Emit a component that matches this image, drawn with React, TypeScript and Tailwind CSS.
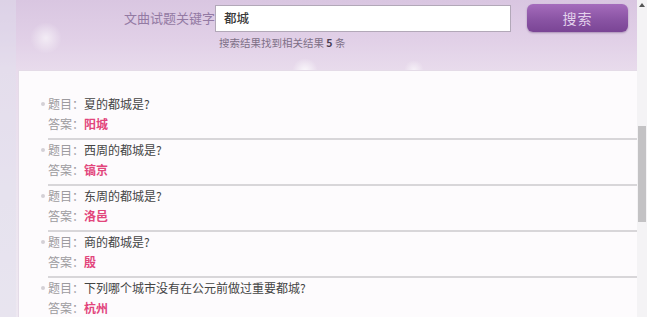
import React from "react";

const items = [
  { q: "夏的都城是?", a: "阳城" },
  { q: "西周的都城是?", a: "镐京" },
  { q: "东周的都城是?", a: "洛邑" },
  { q: "商的都城是?", a: "殷" },
  { q: "下列哪个城市没有在公元前做过重要都城?", a: "杭州" },
];

const font = { fontFamily: '"Noto Sans CJK SC", "Noto Sans", sans-serif' };

export default function App() {
  return (
    <div
      className="relative w-[647px] h-[317px] overflow-hidden flex bg-[linear-gradient(180deg,#d9c6e1_0%,#e1d0e7_40px,#e8dbec_70px,#ece4ef_200px,#eee8f1_100%)]"
      style={font}
    >
      {/* bokeh spots */}
      <div className="absolute left-[30px] top-[22px] w-[32px] h-[32px] rounded-full bg-[radial-gradient(circle,rgba(255,255,255,0.6)_0%,rgba(255,255,255,0)_70%)]" />
      <div className="absolute left-[292px] top-[58px] w-[26px] h-[26px] rounded-full bg-[radial-gradient(circle,rgba(255,255,255,0.8)_0%,rgba(255,255,255,0)_70%)]" />
      <div className="absolute left-[404px] top-[60px] w-[20px] h-[20px] rounded-full bg-[radial-gradient(circle,rgba(255,255,255,0.6)_0%,rgba(255,255,255,0)_70%)]" />
      <div className="absolute left-0 top-0 w-[16px] h-full bg-[rgba(225,225,238,0.45)]" />

      <div className="relative flex-1 flex flex-col min-h-0">
        {/* header */}
        <div className="h-[70px] shrink-0 pt-[4px]">
          <div className="flex items-center h-[28px]">
            <span className="ml-[124px] w-[88px] text-[13px] leading-[28px] text-[#937aa3] whitespace-nowrap">
              文曲试题关键字
            </span>
            <div className="ml-[3px] w-[296px] h-[27px] bg-white border border-[#b2a8b8] flex items-center pl-[8px]">
              <span className="text-[12.5px] font-medium text-[#3a3a3a]">都城</span>
            </div>
            <button className="ml-[16px] w-[101px] h-[28px] rounded-[6px] bg-[linear-gradient(180deg,#a56cbc_0%,#8a54a4_55%,#7a4595_100%)] text-[14px] text-[#e3d2ec] tracking-[1px] shadow-[0_1px_2px_rgba(90,50,110,0.4)]">
              搜索
            </button>
          </div>
          <div className="ml-[219px] mt-[3px] text-[10.5px] leading-[16px] text-[#7d6f86] whitespace-nowrap">
            搜索结果找到相关结果 <span className="font-bold text-[#4a3d52]">5</span> 条
          </div>
        </div>

        {/* panel */}
        <div className="ml-[18px] flex-1 min-h-0 overflow-hidden bg-[#fdfbfd] border-t border-l border-[#e4dbe7] pt-[23px]">
          {items.map((it, i) => (
            <div
              key={i}
              className={
                "relative ml-[29px] pb-[4px] " +
                (i < items.length - 1 ? "border-b-2 border-[#d8d6d9]" : "")
              }
            >
              <span className="absolute left-[-7px] top-[8px] w-[4px] h-[4px] rounded-full bg-[#d4d0d6]" />
              <div className="flex h-[20px] items-center text-[12px] whitespace-nowrap">
                <span className="w-[36px] text-[#9c9a9e]">题目：</span>
                <span className="text-[#444]">{it.q}</span>
              </div>
              <div className="flex h-[20px] items-center text-[12px] whitespace-nowrap">
                <span className="w-[36px] text-[#9c9a9e]">答案：</span>
                <span className="font-bold text-[#e2457c]">{it.a}</span>
              </div>
            </div>
          ))}
        </div>
      </div>

      {/* scrollbar */}
      <div className="relative w-[10px] h-full bg-[#f4f3f5] flex flex-col items-center">
        <div className="mt-[3px] w-0 h-0 border-l-[3px] border-r-[3px] border-b-[4px] border-l-transparent border-r-transparent border-b-[#555]" />
        <div className="absolute left-[1px] top-[126px] w-[8px] h-[96px] bg-[#c3c2c4]" />
      </div>
    </div>
  );
}
